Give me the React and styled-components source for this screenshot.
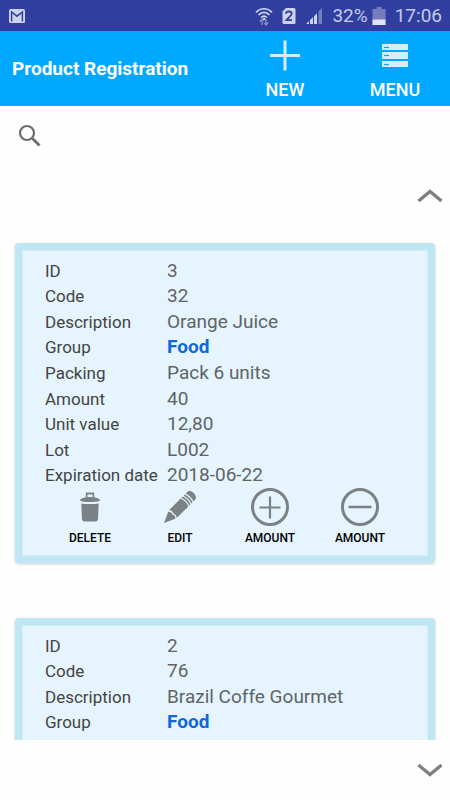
import React, { useRef } from "react";
import styled, { createGlobalStyle } from "styled-components";

const GlobalStyle = createGlobalStyle`
  * {
    box-sizing: border-box;
  }

  body {
    margin: 0;
    background: #fefefe;
    font-family: Roboto, "Liberation Sans", sans-serif;
  }
`;

const Screen = styled.div`
  display: flex;
  flex-direction: column;
  height: 100vh;
  overflow: hidden;
`;

const StatusBar = styled.div`
  display: flex;
  align-items: center;
  flex-shrink: 0;
  height: 31px;
  padding: 0 8px;
  background: #303f9f;
  color: #c5cae9;
  font-size: 19px;
  line-height: 32px;
`;

const StatusIcons = styled.div`
  display: flex;
  align-items: center;
  gap: 9px;
  margin-left: auto;
`;

const Battery = styled.span`
  display: flex;
  align-items: center;
  gap: 4px;
`;

const AppBar = styled.header`
  display: flex;
  align-items: stretch;
  flex-shrink: 0;
  height: 75px;
  background: #00a8ff;
  color: #fff;
`;

const Title = styled.h1`
  flex: 1;
  margin: 0;
  padding-left: 12px;
  font-size: 19px;
  font-weight: 700;
  line-height: 76px;
`;

const BarButton = styled.button`
  display: flex;
  flex-direction: column;
  align-items: center;
  gap: 3px;
  width: 110px;
  padding: 8px 0 0;
  border: none;
  background: none;
  color: inherit;
  font-family: inherit;
  font-size: 18px;
  font-weight: 500;
  line-height: 32px;
  cursor: pointer;
`;

const SearchRow = styled.label`
  display: flex;
  align-items: center;
  flex-shrink: 0;
  gap: 8px;
  height: 60px;
  padding: 0 16px;
`;

const SearchInput = styled.input`
  flex: 1;
  height: 36px;
  border: none;
  outline: none;
  background: none;
  color: #444;
  font-family: inherit;
  font-size: 19px;
`;

const ScrollRow = styled.div`
  display: flex;
  align-items: center;
  justify-content: flex-end;
  flex-shrink: 0;
  height: 60px;
  padding: 0 7px;
`;

const ScrollButton = styled.button`
  display: flex;
  padding: 0;
  border: none;
  background: none;
  cursor: pointer;
`;

const List = styled.main`
  display: flex;
  flex-direction: column;
  flex: 1;
  gap: 55px;
  min-height: 0;
  padding: 17px 15px;
  overflow-y: auto;
  scrollbar-width: none;
`;

const Card = styled.article`
  flex-shrink: 0;
  padding: 8px 23px 6px;
  border: 7px solid #bfe6f3;
  border-radius: 4px;
  background: #e6f5fd;
  box-shadow: 0 1px 3px rgba(0, 0, 0, 0.2), inset 0 0 0 1px #d3eef9;
`;

const Fields = styled.dl`
  display: grid;
  grid-template-columns: 122px 1fr;
  grid-template-rows: repeat(9, 1fr);
  align-items: center;
  height: 230px;
  margin: 0;
  line-height: 24px;
  white-space: nowrap;
`;

const Label = styled.dt`
  color: #444;
  font-size: 17px;
`;

const Value = styled.dd`
  margin: 0;
  color: ${({ $strong }) => ($strong ? "#1167d8" : "#5f6467")};
  font-size: 19px;
  font-weight: ${({ $strong }) => ($strong ? 700 : 400)};
`;

const Actions = styled.div`
  display: grid;
  grid-template-columns: repeat(4, 1fr);
`;

const ActionButton = styled.button`
  display: flex;
  flex-direction: column;
  align-items: center;
  padding: 0;
  border: none;
  background: none;
  color: #000;
  font-family: inherit;
  font-size: 12px;
  font-weight: 500;
  line-height: 24px;
  cursor: pointer;
`;

const MailIcon = () => (
  <svg width="18" height="16" viewBox="0 0 18 16" aria-hidden="true">
    <rect x="1" y="1" width="16" height="14" rx="1.5" fill="#cdd2ee" />
    <path d="M3.6 13.5V4l5.4 4.2L14.4 4v9.5" fill="none" stroke="#303f9f" strokeWidth="1.5" />
  </svg>
);

const WifiIcon = () => (
  <svg width="18" height="20" viewBox="0 0 18 20" fill="none" aria-hidden="true">
    <g stroke="#cdd2ee" strokeWidth="1.7">
      <path d="M1 6.5C5.5 1.5 12.5 1.5 17 6.5" />
      <path d="M3.5 9C6.8 5.6 11.2 5.6 14.5 9" />
      <path d="M6 11.5c2-1.9 4-1.9 6 0" />
    </g>
    <circle cx="9" cy="13" r="1.3" fill="#cdd2ee" />
    <g stroke="#8088c4" strokeWidth="1.5">
      <path d="M7 19v-6M4.8 15.5 7 13l1.5 2" />
      <path d="M11 13v6M9.3 17l1.7 2 2.2-2.5" />
    </g>
  </svg>
);

const SimIcon = () => (
  <svg width="14" height="18" viewBox="0 0 14 18" aria-hidden="true">
    <path d="M4 1h8a1.5 1.5 0 0 1 1.5 1.5v13A1.5 1.5 0 0 1 12 17H2A1.5 1.5 0 0 1 .5 15.5V4.5z" fill="#cdd2ee" />
    <path d="M4 6.8C4.1 3.7 9.7 3.7 9.7 6.8 9.7 8.9 5.8 10.8 4.4 13.2H10" fill="none" stroke="#303f9f" strokeWidth="1.8" />
  </svg>
);

const SignalIcon = () => (
  <svg width="18" height="18" viewBox="0 0 18 18" aria-hidden="true">
    <path d="M1 17l3-3v3zM5 17v-4l3-3v7zM9 17V9.2l3-3V17z" fill="#cdd2ee" />
    <path d="M13.5 17V4.5L17 1v16z" fill="#757dbd" />
  </svg>
);

const BatteryIcon = () => (
  <svg width="14" height="20" viewBox="0 0 14 20" aria-hidden="true">
    <path d="M4.5 1h5v2h4v16H.5V3h4z" fill="#757dbd" />
    <path d="M.5 13.5h13V19H.5z" fill="#e0e3f5" />
  </svg>
);

const PlusIcon = () => (
  <svg width="32" height="32" viewBox="0 0 32 32" stroke="#d2eeff" strokeWidth="3" aria-hidden="true">
    <path d="M16 1.5v30M1 16.5h30" />
  </svg>
);

const MenuIcon = () => (
  <svg width="26" height="32" viewBox="0 0 26 32" aria-hidden="true">
    {[5, 13, 22].map((y) => (
      <g key={y}>
        <rect y={y} width="26" height={y === 13 ? 7 : 6} fill="#d2eeff" />
        <path d={`M2 ${y + 3.5}h5`} stroke="#00a8ff" strokeWidth="1.2" />
      </g>
    ))}
  </svg>
);

const SearchIcon = () => (
  <svg width="26" height="26" viewBox="0 0 26 26" fill="none" stroke="#6d6d6d" aria-hidden="true">
    <circle cx="11" cy="10" r="7" strokeWidth="2.2" />
    <path d="M16.5 15.5l7 7" strokeWidth="2.8" />
  </svg>
);

const ChevronIcon = ({ down }) => (
  <svg width="26" height="16" viewBox="0 0 26 16" fill="none" stroke="#808080" strokeWidth="3.4" aria-hidden="true">
    <path d={down ? "M1.5 3 13 12.5 24.5 3" : "M1.5 13 13 3.5 24.5 13"} />
  </svg>
);

const TrashIcon = () => (
  <svg width="38" height="38" viewBox="0 0 38 38" fill="#7b8184" aria-hidden="true">
    <path d="M14.8 9.5v-5h8.4v5h-1.7v-3h-5v3z" />
    <path d="M9 12.5c0-4.8 20-4.8 20 0-2 2-18 2-20 0z" />
    <path d="M10.3 15.5c4 .8 13.4.8 17.4 0L27 31.5c-.5 1.6-1.5 2-3 2H14c-1.5 0-2.5-.4-3-2z" />
  </svg>
);

const PencilIcon = () => (
  <svg width="38" height="38" viewBox="0 0 38 38" aria-hidden="true">
    {/* drawn flat along the x axis, then turned up to the right */}
    <g transform="translate(3 35) rotate(-45)" fill="#7b8184">
      <path d="M0 0l11-5q2.5 2 1 5 1.5 3-1 5z" />
      <path d="M12.8-5.5H29q2 5.500 0 11H12.800q2-2.700.7-5.500 1.300-2.800-.7-5.500z" />
      <path d="M30.3-5.5h1.6q2 5.500 0 11h-1.600q2-5.500 0-11z" />
      <path d="M33.2-5.5h1.6q2 5.500 0 11h-1.600q2-5.500 0-11z" />
      <path d="M36.1-5.5h2.4C43.5-5.5 43.5 5.5 38.5 5.5h-2.4q2-5.500 0-11z" />
    </g>
  </svg>
);

const CircleIcon = ({ minus }) => (
  <svg width="38" height="38" viewBox="0 0 38 38" fill="none" stroke="#7b8184" aria-hidden="true">
    <circle cx="19" cy="19" r="17.5" strokeWidth="3" />
    {minus ? (
      <path d="M7.5 19h23" strokeWidth="2.5" />
    ) : (
      <path d="M8.5 19.5h21M19 8.5v22" strokeWidth="2.2" />
    )}
  </svg>
);

const products = [
  {
    id: "3",
    editable: true,
    fields: [
      ["ID", "3"],
      ["Code", "32"],
      ["Description", "Orange Juice"],
      ["Group", "Food"],
      ["Packing", "Pack 6 units"],
      ["Amount", "40"],
      ["Unit value", "12,80"],
      ["Lot", "L002"],
      ["Expiration date", "2018-06-22"],
    ],
  },
  {
    id: "2",
    editable: false,
    fields: [
      ["ID", "2"],
      ["Code", "76"],
      ["Description", "Brazil Coffe Gourmet"],
      ["Group", "Food"],
    ],
  },
];

const ProductCard = ({ product }) => (
  <Card>
    <Fields>
      {product.fields.map(([label, value]) => (
        <React.Fragment key={label}>
          <Label>{label}</Label>
          <Value $strong={label === "Group"}>{value}</Value>
        </React.Fragment>
      ))}
    </Fields>
    {product.editable && (
      <Actions>
        <ActionButton type="button">
          <TrashIcon />
          DELETE
        </ActionButton>
        <ActionButton type="button">
          <PencilIcon />
          EDIT
        </ActionButton>
        <ActionButton type="button">
          <CircleIcon />
          AMOUNT
        </ActionButton>
        <ActionButton type="button">
          <CircleIcon minus />
          AMOUNT
        </ActionButton>
      </Actions>
    )}
  </Card>
);

const App = () => {
  const listRef = useRef(null);
  const scroll = (top) => listRef.current.scrollBy({ top, behavior: "smooth" });

  return (
    <Screen>
      <GlobalStyle />
      <StatusBar>
        <MailIcon />
        <StatusIcons>
          <WifiIcon />
          <SimIcon />
          <SignalIcon />
          <Battery>
            32%
            <BatteryIcon />
          </Battery>
          <span>17:06</span>
        </StatusIcons>
      </StatusBar>

      <AppBar>
        <Title>Product Registration</Title>
        <BarButton type="button">
          <PlusIcon />
          NEW
        </BarButton>
        <BarButton type="button">
          <MenuIcon />
          MENU
        </BarButton>
      </AppBar>

      <SearchRow>
        <SearchIcon />
        <SearchInput type="text" aria-label="Search" />
      </SearchRow>

      <ScrollRow>
        <ScrollButton type="button" aria-label="Scroll up" onClick={() => scroll(-375)}>
          <ChevronIcon />
        </ScrollButton>
      </ScrollRow>

      <List ref={listRef}>
        {products.map((product) => (
          <ProductCard key={product.id} product={product} />
        ))}
      </List>

      <ScrollRow>
        <ScrollButton type="button" aria-label="Scroll down" onClick={() => scroll(375)}>
          <ChevronIcon down />
        </ScrollButton>
      </ScrollRow>
    </Screen>
  );
};

export default App;
